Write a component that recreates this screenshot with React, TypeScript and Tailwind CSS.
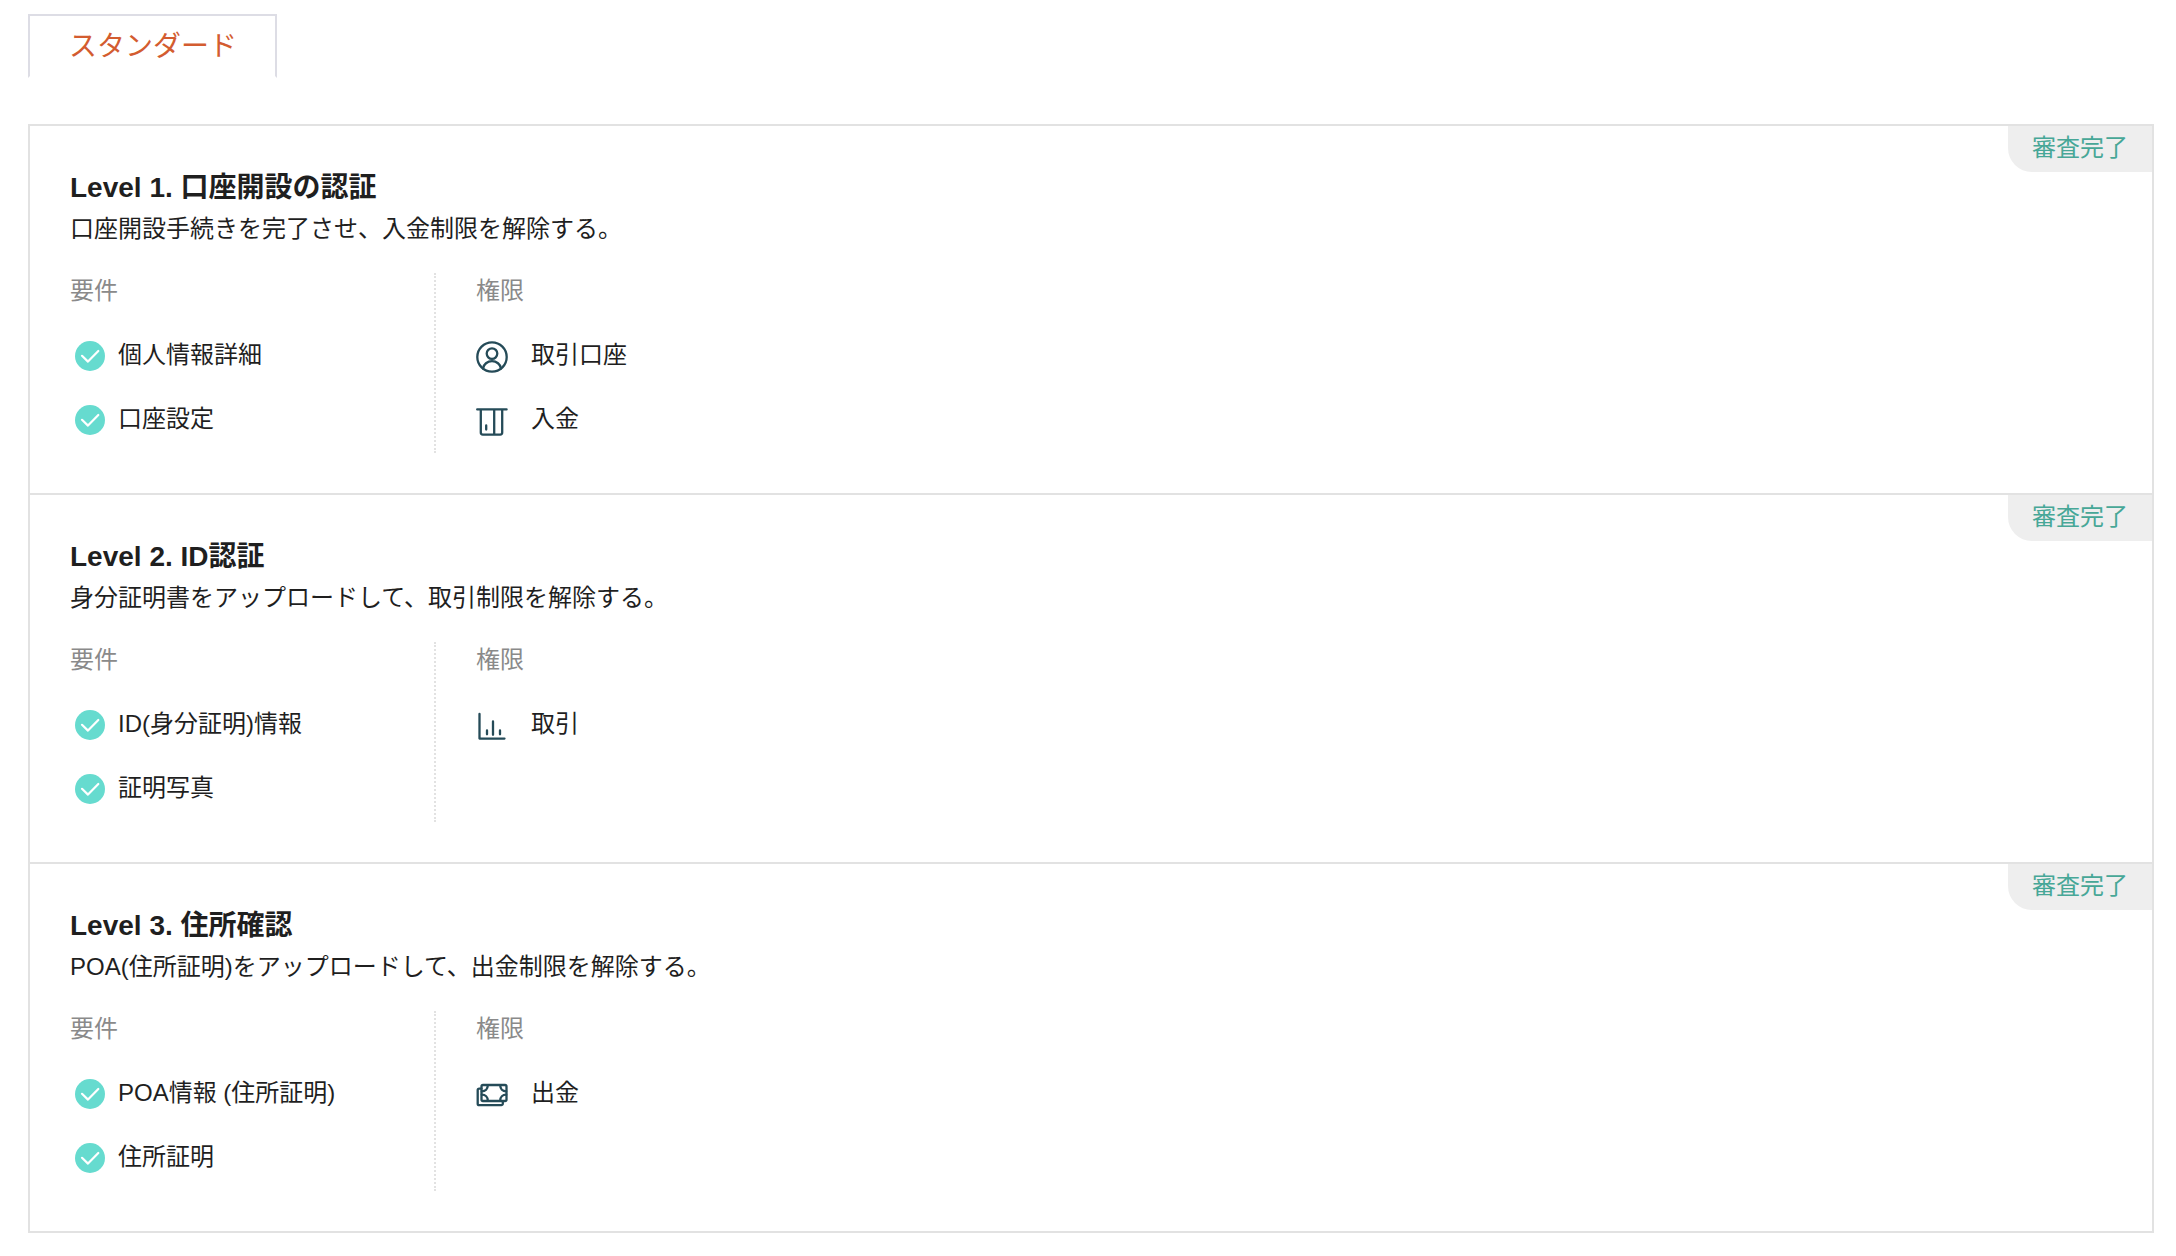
import type { ReactNode } from "react";

function CheckIcon() {
  return (
    <svg viewBox="0 0 30 30" className="mt-0.5 size-[30px] shrink-0" aria-hidden="true">
      <circle cx="15" cy="15" r="15" fill="#66dbcf" />
      <path
        d="M7 14.8 13 20.6 23.3 10"
        fill="none"
        stroke="#fff"
        strokeWidth="2.200"
        strokeLinecap="round"
        strokeLinejoin="round"
      />
    </svg>
  );
}

function LineIcon({ children }: { children: ReactNode }) {
  return (
    <svg
      viewBox="0 0 32 32"
      className="mt-1 size-8 shrink-0 text-[#254b58]"
      fill="none"
      stroke="currentColor"
      strokeWidth="2.300"
      strokeLinecap="round"
      strokeLinejoin="round"
      aria-hidden="true"
    >
      {children}
    </svg>
  );
}

function AccountIcon() {
  return (
    <LineIcon>
      <circle cx="16" cy="16" r="14.700" />
      <circle cx="16" cy="12.600" r="5.300" />
      <path d="M7 27.500c.6-4.300 4.400-7.300 9-7.300s8.400 3 9 7.300" />
    </LineIcon>
  );
}

function DepositIcon() {
  return (
    <LineIcon>
      <path d="M1.200 4.400h29.400M4.800 4.400v23.200a2 2 0 0 0 2 2h17.400a2 2 0 0 0 2-2V4.400M18.200 4.400v25.200M10.200 20.500v4" />
    </LineIcon>
  );
}

function TradeIcon() {
  return (
    <LineIcon>
      <path d="M3.500 4v24.600h25M11 20.500v3.800M17 11.500v13.300M24 20.500v3.800" />
    </LineIcon>
  );
}

function WithdrawIcon() {
  return (
    <LineIcon>
      <rect x="5.500" y="6" width="25" height="16" rx="1.500" />
      <path d="M5.500 9.600H3.200a1.500 1.500 0 0 0-1.500 1.500v13.600a1.500 1.500 0 0 0 1.500 1.500h22.100a1.500 1.500 0 0 0 1.500-1.500V22.500" />
      <path d="M11.800 6.300c0 3.500-2.500 6-6 6M24.200 6.300c0 3.500 2.500 6 6 6M11.800 21.700c0-3.500-2.500-6-6-6M24.200 21.700c0-3.500 2.500-6 6-6" />
    </LineIcon>
  );
}

type Level = {
  title: string;
  description: string;
  requirements: string[];
  permissions: { label: string; icon: ReactNode }[];
};

const levels: Level[] = [
  {
    title: "Level 1. 口座開設の認証",
    description: "口座開設手続きを完了させ、入金制限を解除する。",
    requirements: ["個人情報詳細", "口座設定"],
    permissions: [
      { label: "取引口座", icon: <AccountIcon /> },
      { label: "入金", icon: <DepositIcon /> },
    ],
  },
  {
    title: "Level 2. ID認証",
    description: "身分証明書をアップロードして、取引制限を解除する。",
    requirements: ["ID(身分証明)情報", "証明写真"],
    permissions: [{ label: "取引", icon: <TradeIcon /> }],
  },
  {
    title: "Level 3. 住所確認",
    description: "POA(住所証明)をアップロードして、出金制限を解除する。",
    requirements: ["POA情報 (住所証明)", "住所証明"],
    permissions: [{ label: "出金", icon: <WithdrawIcon /> }],
  },
];

function LevelSection({ level }: { level: Level }) {
  return (
    <section className="relative border-b-2 border-[#e2e2e2] px-10 py-10">
      <span className="absolute top-0 right-0 rounded-bl-3xl bg-[#eee] px-6 pb-0.5 leading-[44px] text-[#47a797]">
        審査完了
      </span>
      <h2 className="text-[28px] leading-[44px] font-bold">{level.title}</h2>
      <p className="leading-[38px]">{level.description}</p>
      <div className="mt-[25px] flex leading-9">
        <div className="w-[366px] shrink-0 border-r-2 border-dotted border-[#e2e2e2] pb-4">
          <h3 className="text-[#8a8a8a]">要件</h3>
          <ul>
            {level.requirements.map((item) => (
              <li key={item} className="mt-7 flex items-center gap-[13px] pl-[5px]">
                <CheckIcon />
                {item}
              </li>
            ))}
          </ul>
        </div>
        <div className="pl-10">
          <h3 className="text-[#8a8a8a]">権限</h3>
          <ul>
            {level.permissions.map((item) => (
              <li key={item.label} className="mt-7 flex items-center gap-[23px]">
                {item.icon}
                {item.label}
              </li>
            ))}
          </ul>
        </div>
      </div>
    </section>
  );
}

export default function App() {
  return (
    <main
      lang="ja"
      className="min-h-screen bg-white pt-3.5 pr-[22px] pb-6 pl-7 font-['Liberation_Sans','Noto_Sans_CJK_JP',sans-serif] text-2xl text-[#1f1f1f]"
    >
      <div role="tablist" className="flex">
        <button
          type="button"
          role="tab"
          aria-selected="true"
          className="h-16 border-2 border-[#dddde5] border-b-white pt-0.5 pr-[38px] pl-[39px] text-[28px] leading-[58px] text-[#d35c30]"
        >
          スタンダード
        </button>
      </div>
      <div className="mt-[46px] border-2 border-b-0 border-[#e2e2e2]">
        {levels.map((level) => (
          <LevelSection key={level.title} level={level} />
        ))}
      </div>
    </main>
  );
}
